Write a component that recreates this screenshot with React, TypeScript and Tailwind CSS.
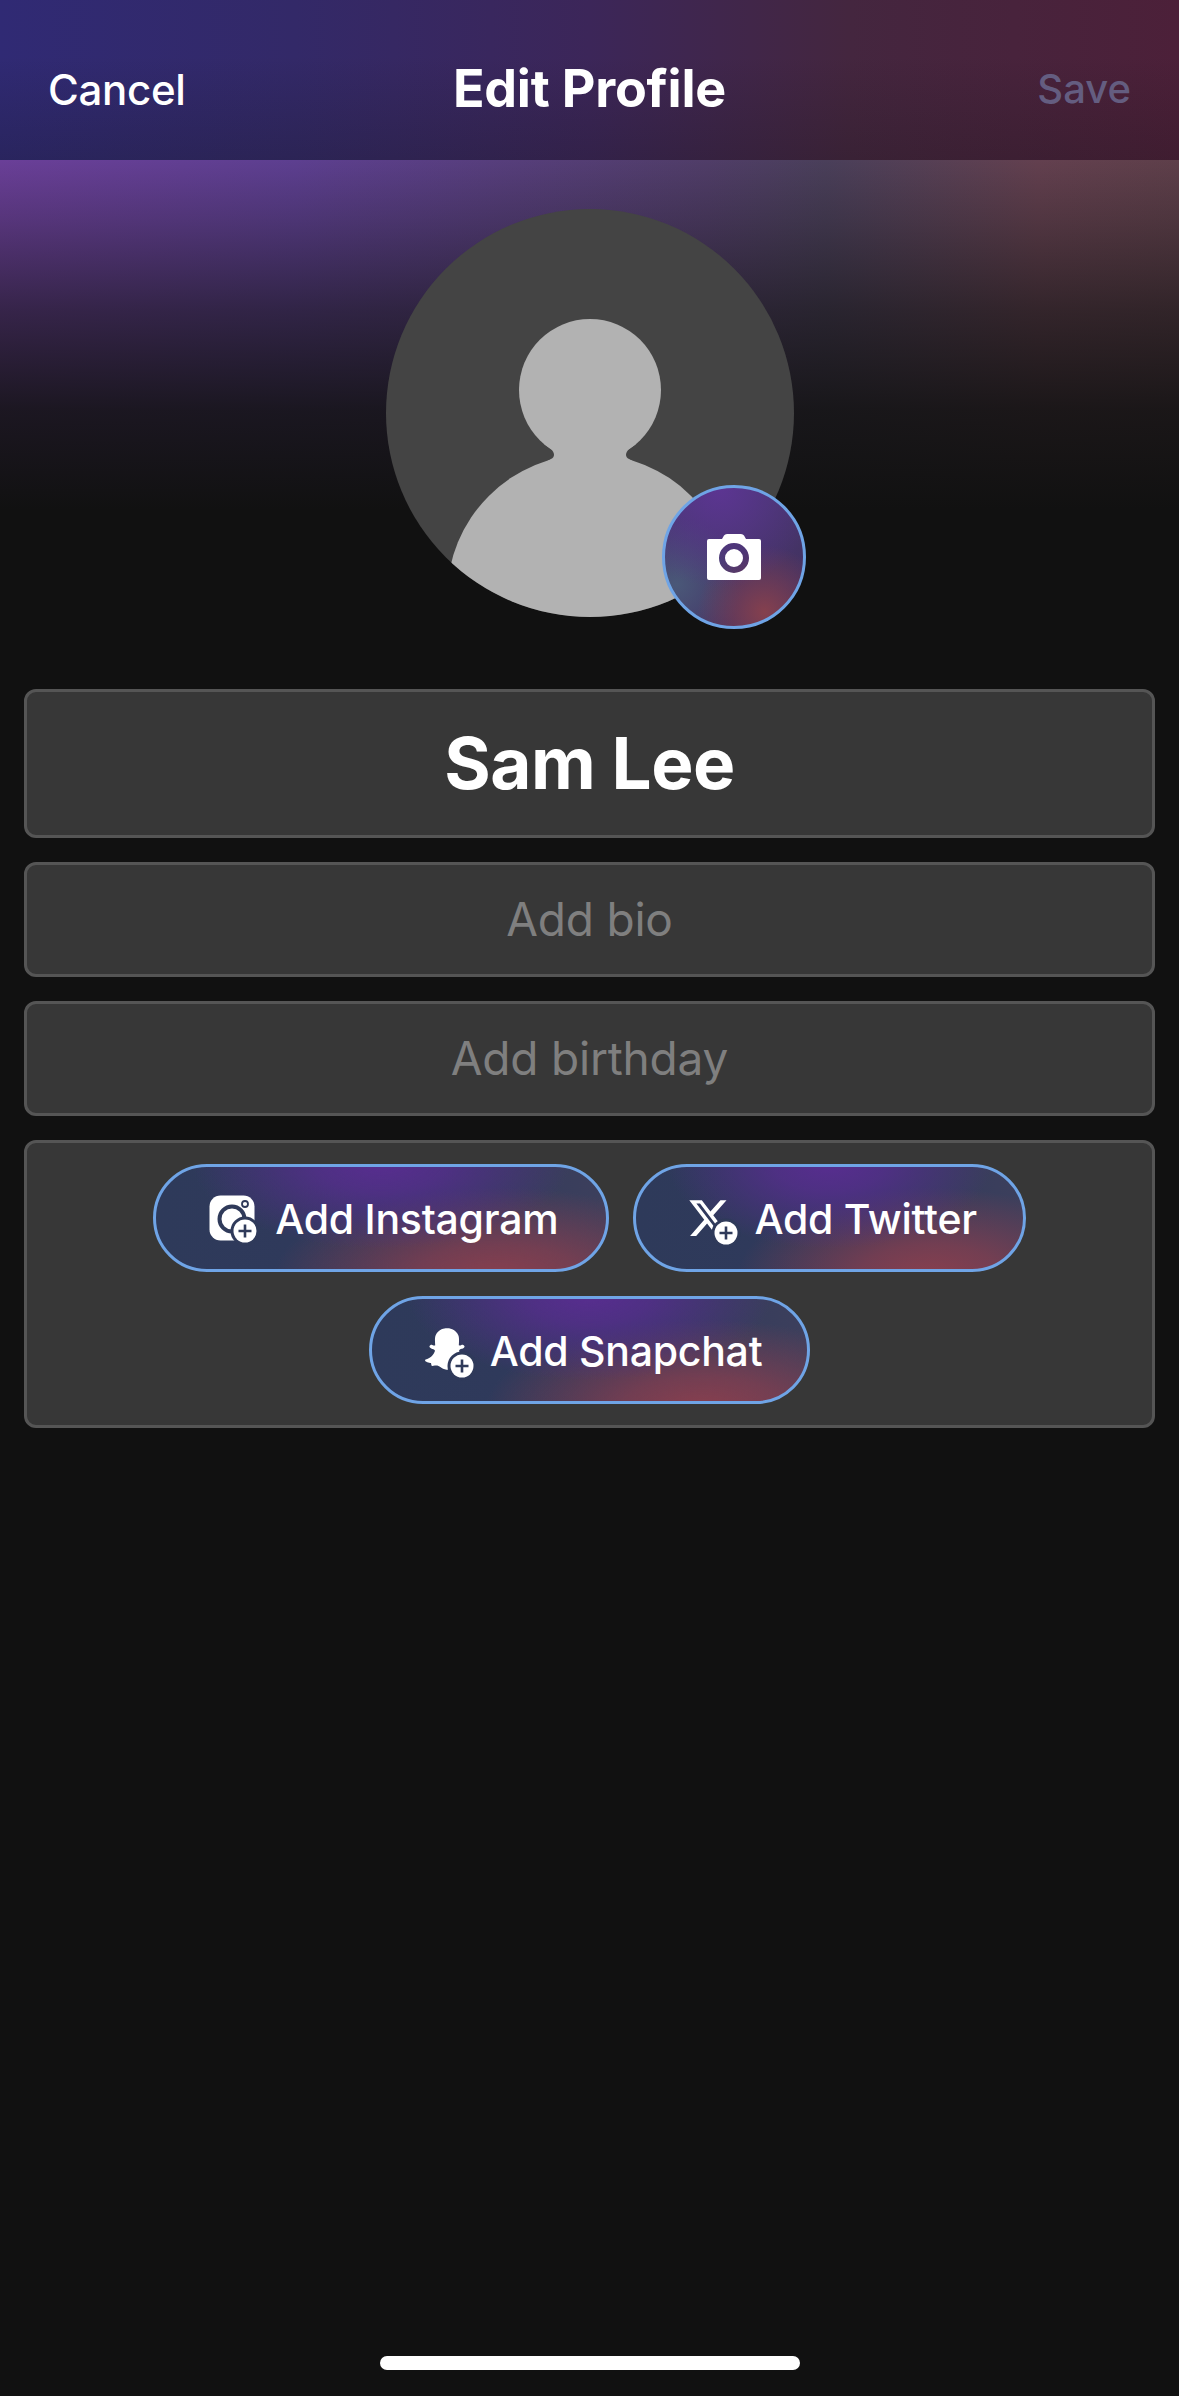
import React from 'react';
import { FaSnapchatGhost } from 'react-icons/fa';
import { FaXTwitter } from 'react-icons/fa6';

const PILL_BG =
  'bg-[radial-gradient(ellipse_42%_85%_at_50%_-5%,#582d90_0%,rgba(88,45,144,0.75)_35%,rgba(88,45,144,0)_100%),radial-gradient(ellipse_50%_90%_at_76%_110%,#8a3f4e_0%,rgba(138,63,78,0.72)_38%,rgba(138,63,78,0)_100%),linear-gradient(90deg,#2e3a5a_0%,#30395c_60%,#3c3f5c_100%)]';

// little white "+" disc that sits on the social icons
function AddBadge({ className }: { className: string }) {
  return (
    <svg viewBox="0 0 30 30" className={`absolute w-[30px] h-[30px] ${className}`}>
      <circle cx="15" cy="15" r="14.5" fill="#2f3a5a" />
      <circle cx="15" cy="15" r="11.5" fill="#fff" />
      <path d="M15 8.5v13M8.5 15h13" stroke="#2f3a5a" strokeWidth="2.6" />
    </svg>
  );
}

function InstagramIcon() {
  return (
    <span className="relative block w-[50px] h-[50px] shrink-0">
      <svg viewBox="0 0 46 46" className="absolute left-0 top-[2px] w-[46px] h-[46px]">
        <rect x="0.5" y="0.5" width="45" height="45" rx="11" fill="#fff" />
        <circle cx="23" cy="24" r="12.5" fill="none" stroke="#2f3a5a" strokeWidth="4" />
        <circle cx="36" cy="9" r="3" fill="none" stroke="#2f3a5a" strokeWidth="1.8" />
      </svg>
      <AddBadge className="left-[21px] top-[23px]" />
    </span>
  );
}

function SocialPill({ icon, label, className }: { icon: React.ReactNode; label: string; className: string }) {
  return (
    <button
      className={`h-[108px] rounded-full border-[3px] border-[#6fa4e6] flex items-center text-white text-[41px] font-[550] tracking-[-0.25px] ${PILL_BG} ${className}`}
    >
      {icon}
      <span className="mt-[3px]">{label}</span>
    </button>
  );
}

export default function App() {
  return (
    <div
      className="min-h-screen flex flex-col bg-[#111111] font-['Inter',sans-serif] bg-no-repeat bg-[length:100%_520px] bg-[linear-gradient(180deg,rgba(17,17,17,0)_160px,rgba(17,17,17,0.22)_220px,rgba(17,17,17,0.58)_310px,rgba(17,17,17,0.88)_410px,#111111_510px),linear-gradient(90deg,#6a3f98_0%,#5d3f90_25%,#503d68_60%,#4a3f5a_70%,#63404f_88%,#5e3f4a_100%)]"
    >
      <header className="h-[160px] pt-[18px] px-[48px] grid grid-cols-[1fr_auto_1fr] items-center bg-[linear-gradient(180deg,rgba(17,17,17,0)_35%,rgba(17,17,17,0.22)_100%),linear-gradient(90deg,#302a74_0%,#332968_25%,#3c2659_50%,#44263f_72%,#4c2039_100%)]">
        <span className="text-white text-[42px] font-[550] tracking-[-0.3px]">Cancel</span>
        <h1 className="text-white text-[52px] font-bold tracking-[-0.2px]">Edit Profile</h1>
        <span className="justify-self-end text-[#645d80] text-[40px] font-[550]">Save</span>
      </header>

      <div className="pt-[49px] flex justify-center">
        <div className="relative w-[408px] h-[408px]">
          <svg viewBox="0 0 408 408" className="w-[408px] h-[408px]">
            <defs>
              <clipPath id="avatar-clip">
                <circle cx="204" cy="204" r="204" />
              </clipPath>
            </defs>
            <circle cx="204" cy="204" r="204" fill="#444444" />
            <g clipPath="url(#avatar-clip)" fill="#b2b2b2">
              <circle cx="204" cy="181" r="71" />
              <circle cx="204" cy="388" r="143" />
              <path d="M158 235L165 240C169 244 169 248 165 250L155 256H253L243 250C239 248 239 244 243 240L250 235Z" />
            </g>
          </svg>
          <button className="absolute left-[276px] top-[276px] w-[144px] h-[144px] rounded-full border-[3px] border-[#6fa4e6] flex items-center justify-center bg-[radial-gradient(circle_at_40%_0%,#5c3592_0%,rgba(92,53,146,0)_62%),radial-gradient(circle_at_72%_90%,#85404e_0%,rgba(133,64,78,0)_42%),radial-gradient(circle_at_8%_70%,#4a5878_0%,rgba(74,88,120,0)_42%),linear-gradient(135deg,#463a72,#43305f)]">
            <svg viewBox="0 0 54 46" className="w-[54px] h-[46px]">
              <path
                fillRule="evenodd"
                fill="#fff"
                d="M15 5L17 1.5Q18 0 20 0H34Q36 0 37 1.5L39 5H52Q54 5 54 7V44Q54 46 52 46H2Q0 46 0 44V7Q0 5 2 5ZM27 9A15 15 0 1 0 27 39A15 15 0 1 0 27 9ZM27 15A9 9 0 1 1 27 33A9 9 0 1 1 27 15Z"
              />
            </svg>
          </button>
        </div>
      </div>

      <div className="mt-[72px] px-[24px] flex flex-col gap-[24px]">
        <div className="h-[149px] rounded-[12px] border-[3px] border-[#555555] bg-[#373737] flex items-center justify-center text-white text-[71px] font-bold tracking-[-0.5px]">
          Sam Lee
        </div>
        <div className="h-[115px] rounded-[12px] border-[3px] border-[#555555] bg-[#373737] flex items-center justify-center text-[#7f7f7f] text-[46px] tracking-[-0.2px]">
          Add bio
        </div>
        <div className="h-[115px] rounded-[12px] border-[3px] border-[#555555] bg-[#373737] flex items-center justify-center text-[#7f7f7f] text-[46px] tracking-[-0.2px]">
          Add birthday
        </div>
        <div className="rounded-[12px] border-[3px] border-[#555555] bg-[#373737] py-[21px] flex flex-wrap justify-center gap-[24px]">
          <SocialPill className="pl-[53px] pr-[48px] gap-[16px]" icon={<InstagramIcon />} label="Add Instagram" />
          <SocialPill
            className="pl-[52px] pr-[46px] gap-[16px]"
            icon={
              <span className="relative block w-[50px] h-[50px] shrink-0">
                <FaXTwitter className="absolute -left-[1px] top-[3px] w-[44px] h-[44px] text-white" />
                <AddBadge className="left-[23px] top-[25px]" />
              </span>
            }
            label="Add Twitter"
          />
          <SocialPill
            className="pl-[53px] pr-[45px] gap-[15px]"
            icon={
              <span className="relative block w-[50px] h-[50px] shrink-0">
                <FaSnapchatGhost className="absolute left-0 top-[2px] w-[44px] h-[44px] text-white" />
                <AddBadge className="left-[22px] top-[26px]" />
              </span>
            }
            label="Add Snapchat"
          />
        </div>
      </div>

      <div className="mt-auto pb-[26px] flex justify-center">
        <div className="w-[420px] h-[14px] rounded-full bg-white" />
      </div>
    </div>
  );
}
